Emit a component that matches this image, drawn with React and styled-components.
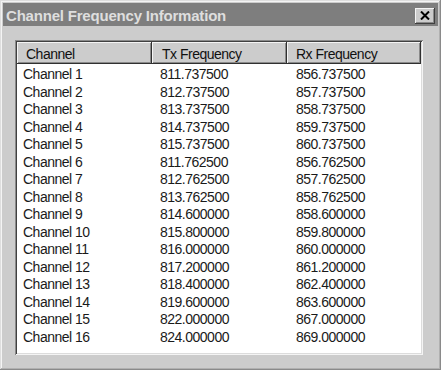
import React from "react";
import styled, { createGlobalStyle } from "styled-components";

const Global = createGlobalStyle`
  html, body { margin: 0; padding: 0; background: #cccccc; }
  body { font-family: "Liberation Sans", Arial, sans-serif; }
  * { box-sizing: border-box; }
`;

const Window = styled.div`
  width: 441px;
  height: 370px;
  background: #cccccc;
  padding: 3px;
  display: flex;
  flex-direction: column;
  box-shadow: inset -1px -1px #8a8a8a, inset 1px 1px #dedede,
    inset -2px -2px #b0b0b0, inset 2px 2px #f4f4f4;
`;

const TitleBar = styled.div`
  height: 23px;
  background: #7e7e7e;
  display: flex;
  align-items: center;
  justify-content: space-between;
  padding: 0 3px 0 3px;
`;

const Title = styled.span`
  color: #dedede;
  font-weight: bold;
  font-size: 15px;
  letter-spacing: -0.2px;
  line-height: 1;
  margin-top: 1px;
`;

const CloseButton = styled.div`
  width: 20px;
  height: 16px;
  margin-top: 2px;
  background: #cccccc;
  display: flex;
  align-items: center;
  justify-content: center;
  box-shadow: inset -1px -1px #404040, inset 1px 1px #f4f4f4,
    inset -2px -2px #8a8a8a;
`;

const Body = styled.div`
  flex: 1;
  padding: 14px 15px 12px 12px;
  display: flex;
`;

const ListBox = styled.div`
  flex: 1;
  background: #ffffff;
  padding: 2px;
  display: flex;
  flex-direction: column;
  box-shadow: inset 1px 1px #8a8a8a, inset -1px -1px #f4f4f4,
    inset 2px 2px #404040, inset -2px -2px #dcdcdc;
`;

const Grid = styled.div`
  display: grid;
  grid-template-columns: 135px 135px 134px;
`;

const HeaderCell = styled.div`
  height: 22px;
  background: #cccccc;
  font-size: 14px;
  letter-spacing: -0.5px;
  color: #111;
  padding-left: ${(p) => p.$pad}px;
  padding-top: 5px;
  line-height: 14px;
  box-shadow: inset -1px -1px #303030, inset 1px 1px #f4f4f4,
    inset -2px -2px #8a8a8a;
`;

const Rows = styled.div`
  padding-top: 2px;
  display: grid;
  grid-template-columns: 135px 135px 134px;
  grid-auto-rows: 17.5px;
`;

const Cell = styled.div`
  font-size: 14px;
  letter-spacing: -0.5px;
  color: #1a1a1a;
  line-height: 17.5px;
  padding-left: ${(p) => p.$pad}px;
  white-space: nowrap;
`;

const data = [
  ["811.737500", "856.737500"],
  ["812.737500", "857.737500"],
  ["813.737500", "858.737500"],
  ["814.737500", "859.737500"],
  ["815.737500", "860.737500"],
  ["811.762500", "856.762500"],
  ["812.762500", "857.762500"],
  ["813.762500", "858.762500"],
  ["814.600000", "858.600000"],
  ["815.800000", "859.800000"],
  ["816.000000", "860.000000"],
  ["817.200000", "861.200000"],
  ["818.400000", "862.400000"],
  ["819.600000", "863.600000"],
  ["822.000000", "867.000000"],
  ["824.000000", "869.000000"],
];

export default function App() {
  return (
    <>
      <Global />
      <Window>
        <TitleBar>
          <Title>Channel Frequency Information</Title>
          <CloseButton>
            <svg width="10" height="9" viewBox="0 0 10 9">
              <path d="M1 0.5 L9 8.5 M9 0.5 L1 8.5" stroke="#000" strokeWidth="2" />
            </svg>
          </CloseButton>
        </TitleBar>
        <Body>
          <ListBox>
            <Grid>
              <HeaderCell $pad={9}>Channel</HeaderCell>
              <HeaderCell $pad={10}>Tx Frequency</HeaderCell>
              <HeaderCell $pad={9}>Rx Frequency</HeaderCell>
            </Grid>
            <Rows>
              {data.map(([tx, rx], i) => (
                <React.Fragment key={i}>
                  <Cell $pad={6}>Channel {i + 1}</Cell>
                  <Cell $pad={8}>{tx}</Cell>
                  <Cell $pad={9}>{rx}</Cell>
                </React.Fragment>
              ))}
            </Rows>
          </ListBox>
        </Body>
      </Window>
    </>
  );
}
